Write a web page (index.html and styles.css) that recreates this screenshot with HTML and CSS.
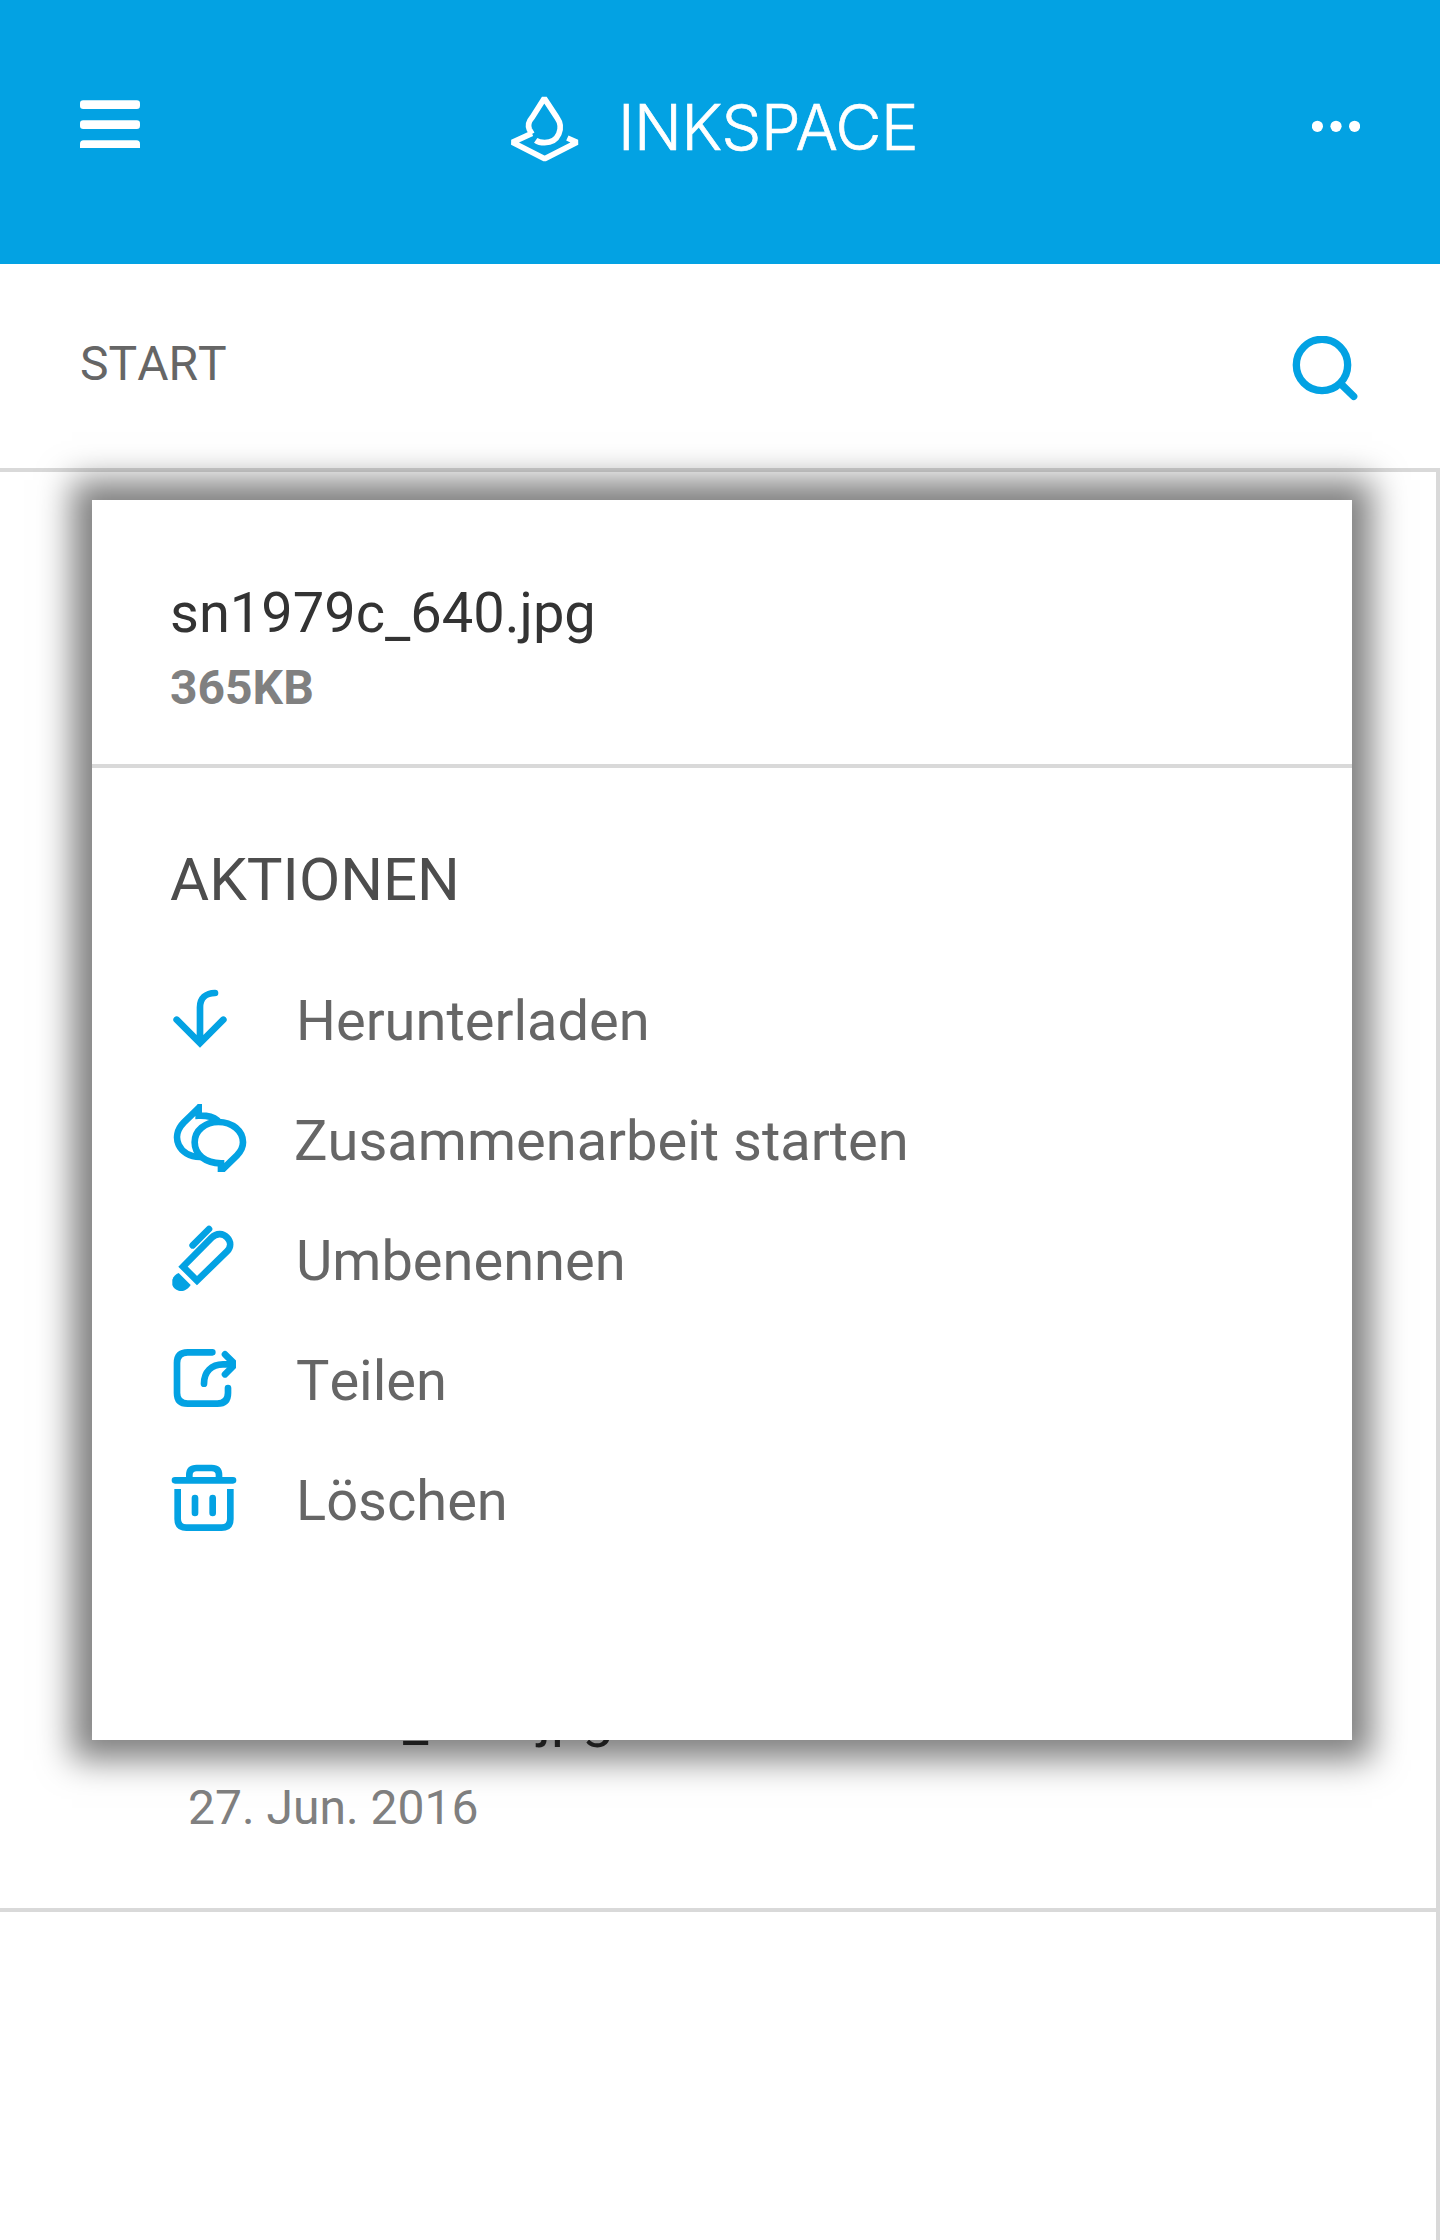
FILE: index.html
```html
<!DOCTYPE html>
<html lang="de">
<head>
<meta charset="utf-8">
<title>Inkspace</title>
<link rel="stylesheet" href="styles.css">
</head>
<body>
<div class="app">
  <header class="topbar">
    <svg class="menu-icon" viewBox="0 0 60 48" aria-label="Menü">
      <rect y="0.3" width="60" height="8.6" rx="3.2"/>
      <rect y="20.3" width="60" height="8.6" rx="3.2"/>
      <path d="M0 48V44Q0 40.3 3.5 40.3H56.5Q60 40.3 60 44V48Z"/>
    </svg>
    <div class="brand">
      <svg class="brand-icon" viewBox="57 42 216 207" aria-hidden="true">
        <path d="M126 162L118 148C113 136 118 122 126 113L163 55L201 113C222 143 207 188 164 188C152 188 144 186 137 181M126 160L67 187L164 236L261 187L232 174"/>
      </svg>
      <span class="brand-name">INKSPACE</span>
    </div>
    <svg class="more-icon" viewBox="0 0 48 12" aria-label="Mehr">
      <circle cx="5.4" cy="6.3" r="5.6"/><circle cx="24" cy="6.3" r="5.6"/><circle cx="42.6" cy="6.3" r="5.6"/>
    </svg>
  </header>
  <nav class="crumbs">
    <span class="crumb">START</span>
    <svg class="search-icon" viewBox="96 738 204 198" aria-label="Suchen">
      <circle cx="186" cy="825" r="77"/><path d="M243 882L281 919"/>
    </svg>
  </nav>
  <main class="files">
    <div class="file">
      <div class="file-name">sn1979c<span class="low">_</span>640.jpg</div>
      <div class="file-date">27. Jun. 2016</div>
    </div>
  </main>
  <section class="dialog">
    <div class="dialog-head">
      <div class="dialog-name">sn1979c<span class="low">_</span>640.jpg</div>
      <div class="dialog-size">365KB</div>
    </div>
    <h2 class="dialog-title">AKTIONEN</h2>
    <ul class="actions">
      <li class="action">
        <svg class="action-icon" viewBox="60 -15 240 330"><path d="M195 69C168 69 150 85 150 112V217M80 149L150 219L220 149"/></svg>
        <span>Herunterladen</span>
      </li>
      <li class="action action-shifted">
        <svg class="action-icon" viewBox="60 15 240 330">
          <svg x="60" y="72" width="240" height="204" viewBox="60 72 240 204">
            <path d="M202 121C190 111 173 106 146 107V84L101 128C60 170 86 229 150 231"/>
            <path d="M213 250C166 249 134 224 134 187C134 151 166 126 205 126C247 126 279 153 279 187C279 204 271 216 261 226L213 273Z"/>
            <path class="solid" d="M143 72H153V108H141ZM205 240H217V276H205Z"/>
          </svg>
        </svg>
        <span>Zusammenarbeit starten</span>
      </li>
      <li class="action">
        <svg class="action-icon" viewBox="60 0 240 330">
          <path d="M141 227L99 185L185 98C201 82 220 86 231 97C243 109 244 126 231 139Z"/>
          <path d="M128 121L177 72"/>
          <path class="solid" d="M86 204L122 240C112 256 98 260 86 257C76 254 70 249 67 240V224C71 213 77 208 86 204Z"/>
        </svg>
        <span>Umbenennen</span>
      </li>
      <li class="action">
        <svg class="action-icon" viewBox="60 15 240 330">
          <svg x="60" y="15" width="198" height="330" viewBox="60 15 198 330">
            <path d="M187 97H113Q81 97 81 129V219Q81 251 113 251H202Q234 251 234 219V204M162 191C162 155 185 133 219 133H252"/>
            <path d="M225 103L255 133L225 163"/>
          </svg>
        </svg>
        <span>Teilen</span>
      </li>
      <li class="action">
        <svg class="action-icon" viewBox="60 15 240 330">
          <path d="M75 121H249M118 116V105Q118 84 140 84H185Q207 84 207 105V116M135 174V219M188 174V219"/>
          <path class="butt" d="M83 147V237Q83 263 109 263H215Q241 263 241 237V147"/>
        </svg>
        <span>Löschen</span>
      </li>
    </ul>
  </section>
</div>
</body>
</html>
```
FILE: styles.css
```css
* { box-sizing: border-box; }

body {
  margin: 0;
  background: #fff;
  font-family: Roboto, sans-serif;
  font-kerning: none;
}

.app {
  position: relative;
  display: flex;
  flex-direction: column;
  width: 1440px;
  height: 2240px;
  overflow: hidden;
}

.topbar {
  display: grid;
  grid-template-columns: 1fr auto 1fr;
  align-items: start;
  height: 264px;
  padding: 0 80px;
  background: #03a2e3;
}

.menu-icon { width: 60px; height: 48px; margin-top: 100px; fill: #fff; }

.brand { display: flex; width: 422px; margin-top: 94px; }

.brand-icon {
  flex: none;
  width: 72px;
  height: 69px;
  fill: none;
  stroke: #fff;
  stroke-width: 17;
  stroke-linejoin: bevel;
}

.brand-name {
  margin-left: 37px;
  color: #fff;
  font-family: Inter, "Liberation Sans", sans-serif;
  font-size: 63px;
  font-weight: 300;
  font-kerning: normal;
  line-height: 66px;
  letter-spacing: -0.4px;
  white-space: nowrap;
  -webkit-text-stroke: 0.7px #fff;
}

.more-icon {
  justify-self: end;
  width: 48px;
  height: 12px;
  margin-top: 120px;
  fill: #fff;
}

.crumbs {
  display: flex;
  justify-content: space-between;
  align-items: flex-start;
  height: 208px;
  padding: 69px 80px 0;
  border-bottom: 4px solid #d9d9d9;
}

.crumb { color: #666; font-size: 48px; line-height: 61px; }

.search-icon {
  width: 68px;
  height: 66px;
  margin-top: 3px;
  fill: none;
  stroke: #03a2e3;
  stroke-width: 22;
  stroke-linecap: round;
}

.files { flex: 1; border-right: 4px solid #d9d9d9; }

.file {
  display: flex;
  flex-direction: column;
  justify-content: flex-end;
  height: 1440px;
  padding: 0 188px 70px;
  border-bottom: 4px solid #d9d9d9;
}

.file-name { color: #333; font-size: 56px; line-height: 64px; }

/* the underscore hangs a little below the baseline */
.low { line-height: 0; vertical-align: -5px; }

.file-date {
  margin-top: 28px;
  color: #808080;
  font-size: 48px;
  line-height: 61px;
}

.dialog {
  position: absolute;
  top: 500px;
  left: 92px;
  width: 1260px;
  height: 1240px;
  background: #fff;
  box-shadow: 0 0 32px 20px rgba(0, 0, 0, 0.5);
}

.dialog-head {
  height: 268px;
  padding: 81px 78px 0;
  border-bottom: 4px solid #d9d9d9;
}

.dialog-name { color: #333; font-size: 56px; line-height: 64px; }

.dialog-size {
  margin-top: 12px;
  color: #808080;
  font-size: 48px;
  font-weight: 700;
  line-height: 61px;
}

.dialog-title {
  margin: 76px 78px 50px;
  color: #4d4d4d;
  font-size: 60px;
  font-weight: 400;
  line-height: 71px;
}

.actions { margin: 0; padding: 0 78px; list-style: none; }

.action {
  display: flex;
  gap: 46px;
  height: 120px;
  color: #666;
  font-size: 56px;
  line-height: 112px;
}

.action-shifted { gap: 44px; }

.action-icon {
  width: 80px;
  height: 110px;
  fill: none;
  stroke: #03a2e3;
  stroke-width: 20;
  stroke-linecap: round;
}

.action-icon .solid { fill: #03a2e3; stroke: none; }
.action-icon .butt { stroke-linecap: butt; }
```
